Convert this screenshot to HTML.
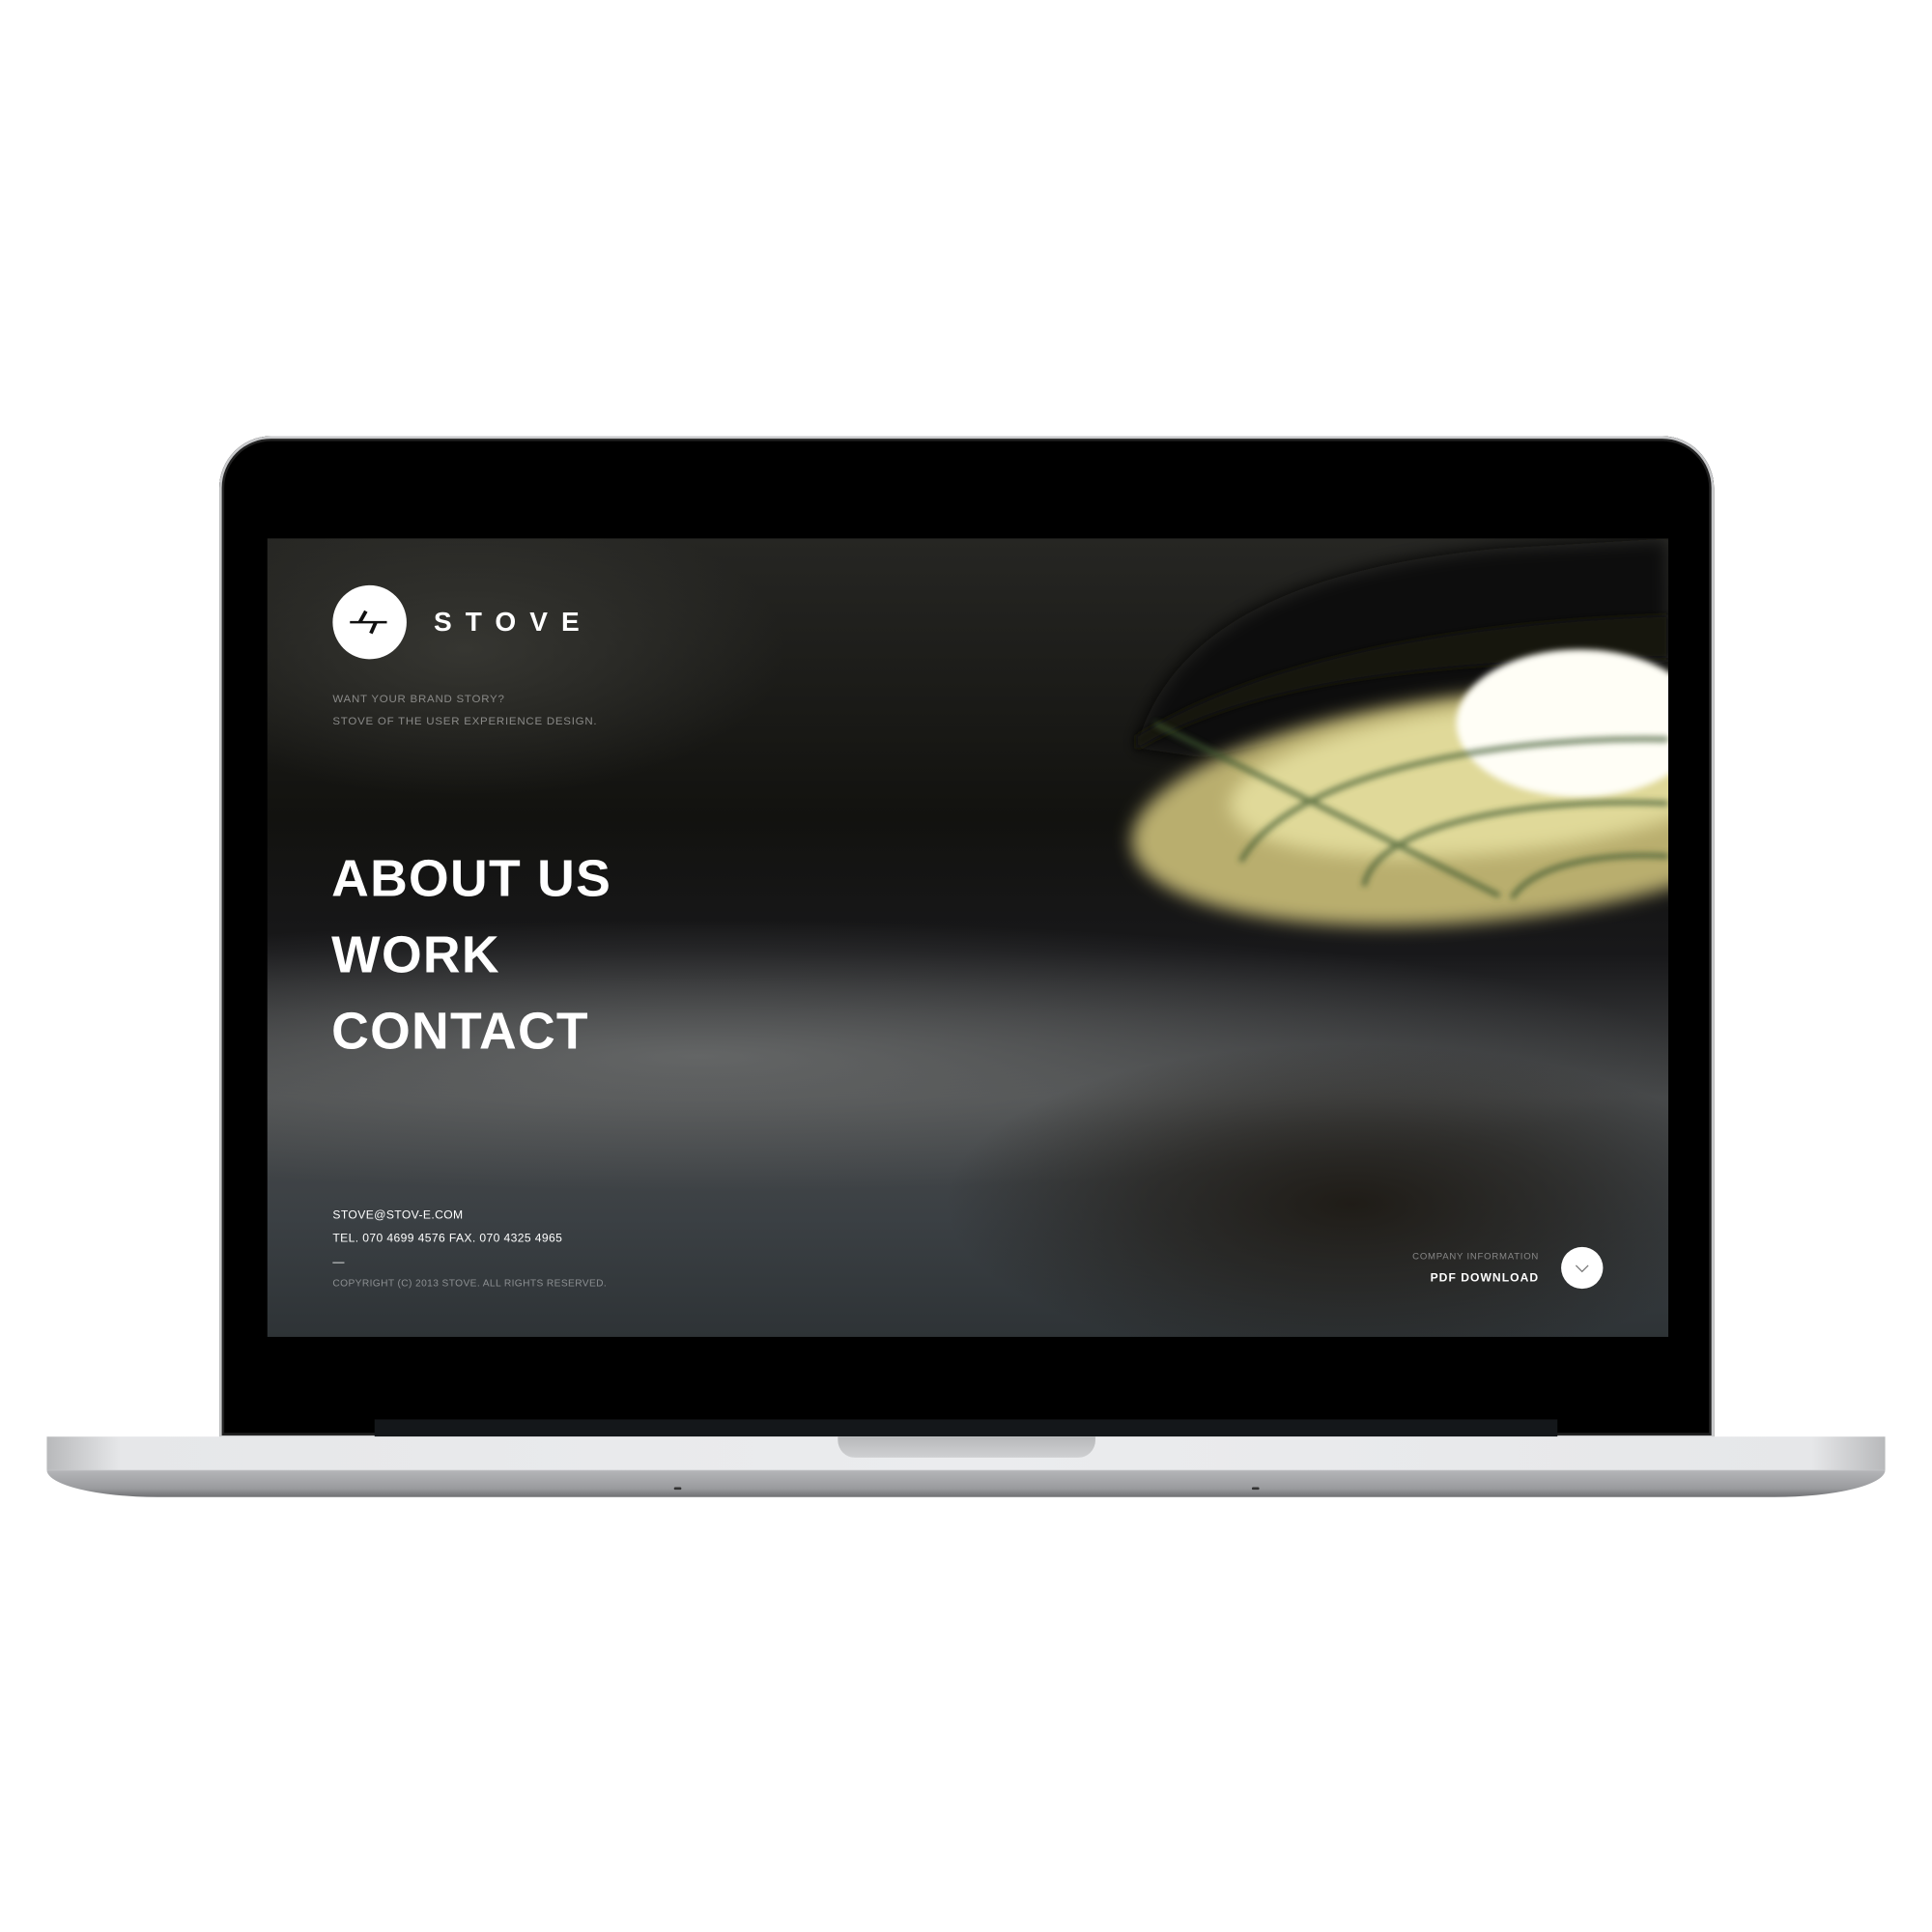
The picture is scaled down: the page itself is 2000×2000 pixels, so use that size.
<!DOCTYPE html>
<html><head><meta charset="utf-8"><style>
html,body{margin:0;padding:0;background:#fff;width:2000px;height:2000px;overflow:hidden}
#w{position:absolute;left:0;top:0;width:1568px;height:1568px;transform:scale(1.27551);transform-origin:0 0;font-family:"Liberation Sans",sans-serif}
.lid{position:absolute;left:178px;top:354px;width:1213px;height:813px;border-radius:42px 42px 0 0;background:#000;box-shadow:inset 0 0 0 2px #c9cacc,inset 0 0 0 4px #222}
.hinge{position:absolute;left:304px;top:1152px;width:960px;height:14px;background:#14171a}
.base{position:absolute;left:38px;top:1166px;width:1492px;height:49px;border-radius:0 0 90px 90px/0 0 22px 22px;background:linear-gradient(#f0f1f2 0,#e2e3e5 8px,#dadbdd 26px,#b3b4b7 28px,#9a9b9e 42px,#6f7073 49px)}
.base:before{content:"";position:absolute;left:0;right:0;top:0;height:27px;background:linear-gradient(90deg,#b8b9bb,#e6e7e9 4%,#ebecee 50%,#e6e7e9 96%,#b8b9bb)}
.notch{position:absolute;left:680px;top:1166px;width:209px;height:17px;border-radius:0 0 14px 14px;background:linear-gradient(#b7b8ba,#cfd0d2)}
.scr{position:absolute;left:217px;top:437px;width:1137px;height:648px;overflow:hidden;
background:
radial-gradient(ellipse 330px 130px at 880px 540px,rgba(28,24,18,0.9),rgba(28,24,18,0.5) 50%,rgba(28,24,18,0) 100%),
radial-gradient(ellipse 260px 120px at 160px 90px,rgba(60,60,55,0.8),rgba(60,60,55,0) 100%),
radial-gradient(ellipse 800px 110px at 350px 420px,rgba(110,112,112,0.8),rgba(110,112,112,0.3) 60%,rgba(110,112,112,0) 100%),
linear-gradient(#262623 0%,#12120f 35%,#18181a 52%,#47494a 70%,#3b4044 85%,#2e3336 100%)}
.t{position:absolute;color:#fff;white-space:nowrap}
</style></head><body><div id="w">
<div class="lid"></div><div class="hinge"></div>
<div class="base"></div><div class="notch"></div>
<div style="position:absolute;left:547px;top:1207px;width:6px;height:2px;background:#333;border-radius:1px"></div>
<div style="position:absolute;left:1016px;top:1207px;width:6px;height:2px;background:#333;border-radius:1px"></div>
<div class="scr">
<svg width="1137" height="648" style="position:absolute;left:0;top:0">
<defs>
<filter id="b2" x="-30%" y="-60%" width="160%" height="220%"><feGaussianBlur stdDeviation="7"/></filter>
<filter id="b3" x="-30%" y="-60%" width="160%" height="220%"><feGaussianBlur stdDeviation="2.5"/></filter>
</defs>
<path d="M705 170 C730 80 820 25 1000 8 L1137 0 L1137 100 L760 178 Z" fill="#0c0b09" filter="url(#b2)"/>
<ellipse cx="990" cy="218" rx="290" ry="92" transform="rotate(-6 990 218)" fill="#b9ae6e" filter="url(#b2)"/>
<ellipse cx="1000" cy="195" rx="220" ry="60" transform="rotate(-6 1000 195)" fill="#e0d999" filter="url(#b2)"/>
<path d="M705 172 C800 115 950 100 1137 97 L1137 62 C950 68 800 102 705 160 Z" fill="#15130e" filter="url(#b3)"/>
<ellipse cx="1065" cy="150" rx="100" ry="60" fill="#fffef6" filter="url(#b3)"/>
<g fill="none" stroke="#405a30" stroke-width="4" filter="url(#b3)" opacity="0.8">
<path d="M720 150 L1000 290"/>
<path d="M790 262 C830 190 1000 160 1137 163"/>
<path d="M890 282 C900 230 1030 210 1137 215"/>
<path d="M1010 292 C1030 260 1100 255 1137 258"/>
</g>
</svg>
<div style="position:absolute;left:53px;top:38px;width:60px;height:60px;border-radius:50%;background:#fff"></div>
<svg width="60" height="60" style="position:absolute;left:53px;top:38px"><path d="M14 30 H44" stroke="#111" stroke-width="2"/><path d="M27 21 L22 30 M35 30 L31 39" stroke="#111" stroke-width="3"/></svg>
<div class="t" style="left:135px;top:55px;font-size:22px;font-weight:bold;letter-spacing:11px">STOVE</div>
<div class="t" style="left:53px;top:121px;font-size:9px;color:#8a8a88;letter-spacing:0.6px;line-height:18px">WANT YOUR BRAND STORY?<br>STOVE OF THE USER EXPERIENCE DESIGN.</div>
<div class="t" style="left:52px;top:245px;font-size:42px;font-weight:bold;line-height:62px;letter-spacing:1px">ABOUT US<br>WORK<br>CONTACT</div>
<div class="t" style="left:53px;top:540px;font-size:9.5px;line-height:19px;letter-spacing:0.3px">STOVE@STOV-E.COM<br>TEL. 070 4699 4576 FAX. 070 4325 4965<br>—</div>
<div class="t" style="left:53px;top:600px;font-size:8px;color:#8c8f92;letter-spacing:0.3px">COPYRIGHT (C) 2013 STOVE. ALL RIGHTS RESERVED.</div>
<div class="t" style="right:105px;top:578px;font-size:7.5px;color:#888;letter-spacing:0.6px">COMPANY INFORMATION</div>
<div class="t" style="right:105px;top:595px;font-size:9.5px;font-weight:bold;letter-spacing:0.8px">PDF DOWNLOAD</div>
<div style="position:absolute;left:1050px;top:575px;width:34px;height:34px;border-radius:50%;background:#fff"></div>
<svg width="34" height="34" style="position:absolute;left:1050px;top:575px"><path d="M12 15 L17 20 L22 15" fill="none" stroke="#777" stroke-width="1"/></svg>
</div>
</div></body></html>
